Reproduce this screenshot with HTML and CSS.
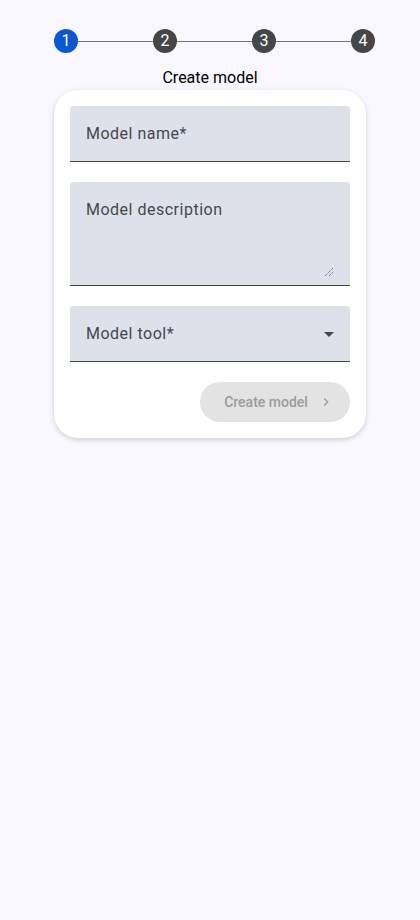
FILE: index.html
```html
<!DOCTYPE html>
<html>
<head>
<meta charset="utf-8">
<link rel="stylesheet" href="styles.css">
</head>
<body>
<div class="page">
  <div class="stepper">
    <span class="step active">1</span>
    <span class="line"></span>
    <span class="step">2</span>
    <span class="line"></span>
    <span class="step">3</span>
    <span class="line"></span>
    <span class="step">4</span>
  </div>
  <div class="step-title">Create model</div>
  <div class="card">
    <div class="field"><span class="label">Model name*</span></div>
    <div class="field area">
      <span class="label">Model description</span>
      <svg class="grip" width="10" height="10" viewBox="0 0 10 10"><path d="M1 9 L9 1 M5 9 L9 5" stroke="#44474e" stroke-width="1" stroke-dasharray="1 1" fill="none"/></svg>
    </div>
    <div class="field select">
      <span class="label">Model tool*</span>
      <span class="arrow"></span>
    </div>
    <div class="actions">
      <button class="btn">Create model
        <svg width="16" height="16" viewBox="0 0 24 24"><path d="M9.3 6.7 L14.6 12 L9.3 17.3" stroke="currentColor" stroke-width="2" fill="none"/></svg>
      </button>
    </div>
  </div>
</div>
</body>
</html>
```
FILE: styles.css
```css
html, body { margin: 0; padding: 0; }
body {
  background: #f9f8fe;
  font-family: Roboto, "Liberation Sans", sans-serif;
  width: 420px;
  height: 920px;
}
.page {
  padding-top: 29px;
  display: flex;
  flex-direction: column;
  align-items: flex-start;
}
.stepper {
  margin-left: 54px;
  width: 321px;
  display: flex;
  align-items: center;
}
.step {
  width: 24px;
  height: 24px;
  border-radius: 50%;
  background: #444746;
  color: #fff;
  font-size: 16px;
  line-height: 24px;
  text-align: center;
  flex: none;
}
.step.active { background: #0b57d0; }
.line {
  flex: 1;
  height: 1px;
  background: #747775;
}
.step-title {
  align-self: stretch;
  text-align: center;
  font-size: 16px;
  color: #000;
  line-height: 20px;
  margin-top: 15px;
}
.card {
  margin-left: 54px;
  margin-top: 2px;
  width: 280px;
  padding: 16px;
  background: #fff;
  border-radius: 24px;
  box-shadow: 0 2px 4px rgba(0,0,0,0.12), 0 1px 8px rgba(0,0,0,0.06);
  display: flex;
  flex-direction: column;
  gap: 20px;
}
.field {
  position: relative;
  height: 55px;
  background: #dfe1ea;
  border-radius: 4px 4px 0 0;
  border-bottom: 1px solid #44474e;
  display: flex;
  align-items: center;
  padding: 0 16px;
}
.field.area {
  height: 103px;
  align-items: flex-start;
}
.field.area .label { margin-top: 18px; }
.label {
  font-size: 16px;
  color: #44474e;
  letter-spacing: 0.5px;
}
.grip {
  position: absolute;
  right: 16px;
  bottom: 8px;
}
.arrow {
  position: absolute;
  right: 16px;
  top: 26px;
  width: 0;
  height: 0;
  border-left: 5px solid transparent;
  border-right: 5px solid transparent;
  border-top: 5px solid #44474e;
}
.actions {
  display: flex;
  justify-content: flex-end;
}
.btn {
  width: 150px;
  height: 40px;
  border: none;
  border-radius: 20px;
  background: #e3e3e3;
  color: #9b9b9b;
  font-family: Roboto, "Liberation Sans", sans-serif;
  font-size: 14px;
  font-weight: 500;
  display: flex;
  align-items: center;
  justify-content: center;
  gap: 10px;
  padding: 0 0 0 8px;
}
.btn svg { flex: none; }
```
